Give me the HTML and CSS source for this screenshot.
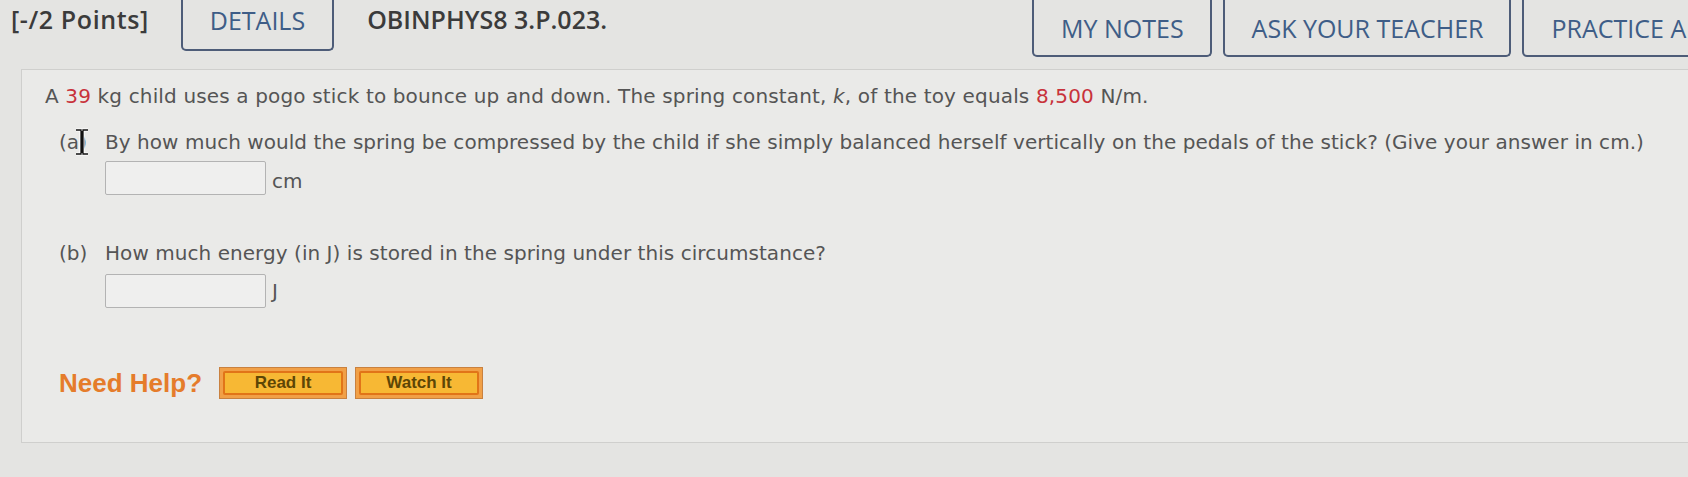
FILE: index.html
```html
<!DOCTYPE html>
<html lang="en">
<head>
<meta charset="utf-8">
<title>OBINPHYS8 3.P.023.</title>
<link rel="stylesheet" href="styles.css">
</head>
<body>
<header class="topbar">
  <div class="left-group">
    <span class="points">[-/2 Points]</span>
    <span class="tab tab-left">DETAILS</span>
    <span class="qid">OBINPHYS8 3.P.023.</span>
  </div>
  <div class="right-group">
    <span class="tab tab-right">MY NOTES</span>
    <span class="tab tab-right">ASK YOUR TEACHER</span>
    <span class="tab tab-right">PRACTICE ANOTHER</span>
  </div>
</header>
<main class="qbox">
  <p class="intro">A <span class="num">39</span> kg child uses a pogo stick to bounce up and down. The spring constant, <i>k</i>, of the toy equals <span class="num">8,500</span> N/m.</p>
  <div class="part part-a">
    <div class="part-row">
      <span class="label">(a)<svg class="cursor" width="16" height="28" viewBox="0 0 16 28"><path d="M2 2h5v24H2M14 2H9v24h5M8 3v22" fill="none" stroke="#fff" stroke-width="3"/><path d="M2 2h5v24H2M14 2H9v24h5M8 3v22" fill="none" stroke="#111" stroke-width="1.3"/></svg></span>
      <span class="text">By how much would the spring be compressed by the child if she simply balanced herself vertically on the pedals of the stick? (Give your answer in cm.)</span>
    </div>
    <div class="answer"><span class="input"></span><span class="unit">cm</span></div>
  </div>
  <div class="part part-b">
    <div class="part-row">
      <span class="label">(b)</span>
      <span class="text">How much energy (in J) is stored in the spring under this circumstance?</span>
    </div>
    <div class="answer"><span class="input"></span><span class="unit">J</span></div>
  </div>
  <div class="help">
    <span class="need">Need Help?</span>
    <span class="hbtn"><span class="hin">Read It</span></span>
    <span class="hbtn"><span class="hin">Watch It</span></span>
  </div>
</main>
</body>
</html>
```
FILE: styles.css
```css
html, body {
  margin: 0;
  padding: 0;
}
body {
  background: #e4e4e2;
  width: 1688px;
  height: 477px;
  overflow: hidden;
  font-family: "DejaVu Sans", Verdana, sans-serif;
}
.topbar {
  display: flex;
  height: 69px;
  align-items: flex-start;
  font-family: "Open Sans", "DejaVu Sans", sans-serif;
  font-size: 25px;
  white-space: nowrap;
}
.left-group {
  flex: 0 0 1032px;
  display: flex;
  align-items: flex-start;
}
.right-group {
  flex: 0 0 auto;
  display: flex;
  align-items: flex-start;
  gap: 11px;
}
.points {
  margin-left: 11px;
  margin-top: 3px;
  color: #3b3b3b;
  font-weight: 600;
  line-height: 33px;
  letter-spacing: 0.6px;
}
.qid {
  margin-left: 33px;
  margin-top: 3px;
  color: #3b3b3b;
  font-weight: 600;
  line-height: 33px;
}
.tab {
  display: flex;
  align-items: center;
  padding: 0 27px;
  border: 2px solid #4d5c78;
  border-top: none;
  border-radius: 0 0 5px 5px;
  color: #3e5d87;
  font-weight: 500;
  box-sizing: border-box;
}
.tab-left {
  margin-left: 32px;
  height: 51px;
  padding-bottom: 10px;
  padding-top: 0;
}
.tab-right {
  height: 57px;
  padding: 0 26px 0 27px;
}
.qbox {
  margin: 0 -20px 0 21px;
  height: 374px;
  box-sizing: border-box;
  border: 1px solid #cfcfcd;
  border-right: none;
  background: #eaeae8;
  padding: 12px 0 0 23px;
  color: #555555;
  font-size: 20px;
}
.intro {
  margin: 0;
  line-height: 28px;
  letter-spacing: 0.15px;
}
.num {
  color: #c8323b;
}
.part {
  padding-left: 14px;
}
.part-a {
  margin-top: 18px;
}
.part-b {
  margin-top: 44px;
}
.part-row {
  display: flex;
  line-height: 28px;
  letter-spacing: 0.05px;
}
.label {
  position: relative;
  flex: 0 0 46px;
}
.cursor {
  position: absolute;
  left: 15px;
  top: 0;
}
.answer {
  display: flex;
  align-items: center;
  margin-left: 46px;
  gap: 6px;
}
.part-a .answer {
  margin-top: 5px;
}
.part-b .answer {
  margin-top: 7px;
}
.input {
  display: block;
  width: 161px;
  height: 34px;
  box-sizing: border-box;
  border: 1px solid #b3b3b3;
  border-radius: 2px;
  background: #efefee;
}
.unit {
  font-size: 20px;
  line-height: 28px;
}
.part-a .unit {
  margin-top: 6px;
}
.help {
  display: flex;
  align-items: center;
  margin-top: 59px;
  padding-left: 14px;
  font-family: "Liberation Sans", Arial, sans-serif;
}
.need {
  color: #e57c2b;
  font-weight: bold;
  font-size: 26px;
  margin-right: 17px;
}
.hbtn {
  display: block;
  width: 128px;
  height: 32px;
  box-sizing: border-box;
  margin-right: 8px;
  padding: 3px;
  border: 1px solid #c9813f;
  background: #f1a047;
}
.hin {
  display: flex;
  align-items: center;
  justify-content: center;
  height: 100%;
  box-sizing: border-box;
  border: 2px solid #e17418;
  border-radius: 2px;
  background: #f7b834;
  color: #5d4606;
  font-weight: bold;
  font-size: 17px;
}
```
